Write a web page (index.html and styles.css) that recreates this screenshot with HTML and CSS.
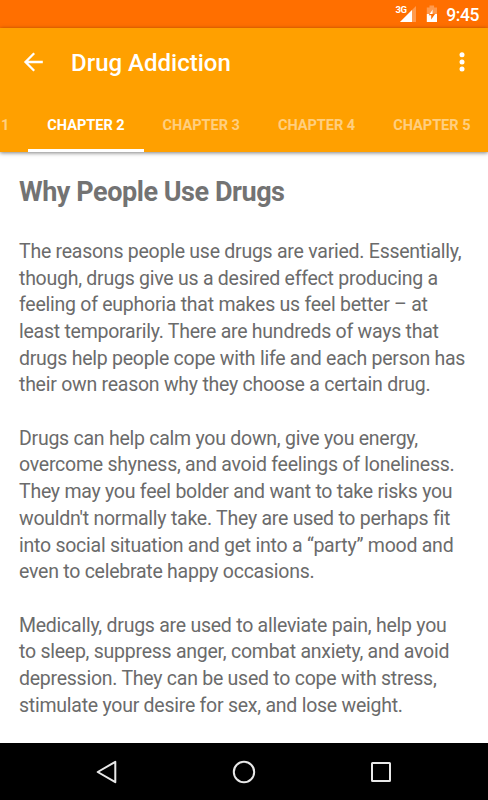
FILE: index.html
```html
<!DOCTYPE html>
<html lang="en">
<head>
    <title>Drug Addiction</title>
    <meta charset="UTF-8">
    <meta name="viewport" content="width=device-width, initial-scale=1.0">
    <link rel="stylesheet" href="styles.css">
</head>
<body>
    <div class="status-bar">
        <svg class="signal" width="22" height="18" viewBox="0 0 22 18">
            <path d="M21 1v16H5z" fill="#fff" fill-opacity="0.3"/>
            <path d="M17 5v12H5z" fill="#fff"/>
            <text class="network" x="0.5" y="8.3">3G</text>
        </svg>
        <svg class="battery" width="12" height="18" viewBox="0 0 12 18">
            <path d="M3.5 0.5h4.6v1.9h2.9V9H.8V2.4h2.7z" fill="#fff" fill-opacity="0.3"/>
            <path d="M.8 9h10.2v8H.8z" fill="#fff"/>
            <path d="M6.6 4.5v4.2h2.6L5.2 14.5V10.3H2.7z" fill="#ff6f00"/>
            <path d="M6.6 4.5V9H3.6z" fill="#fff"/>
        </svg>
        <span class="clock">9:45</span>
    </div>
    <header>
        <div class="toolbar">
            <svg class="back" width="20" height="20" viewBox="0 0 20 20">
                <path d="M19.8 10H2.5M11.2 1.3L2.5 10l8.7 8.7" fill="none" stroke="#fff" stroke-width="2.3"/>
            </svg>
            <h1>Drug Addiction</h1>
            <svg class="more" width="6" height="20" viewBox="0 0 6 20" fill="#fff">
                <circle cx="3" cy="2.8" r="2.5"/>
                <circle cx="3" cy="9.9" r="2.5"/>
                <circle cx="3" cy="17" r="2.5"/>
            </svg>
        </div>
        <nav class="tabs">
            <span class="tab">Chapter 1</span>
            <span class="tab active">Chapter 2</span>
            <span class="tab">Chapter 3</span>
            <span class="tab">Chapter 4</span>
            <span class="tab">Chapter 5</span>
        </nav>
    </header>
    <main>
        <h2>Why People Use Drugs</h2>
        <p>The reasons people use drugs are varied. Essentially,<br>
        though, drugs give us a desired effect producing a<br>
        feeling of euphoria that makes us feel better – at<br>
        least temporarily. There are hundreds of ways that<br>
        drugs help people cope with life and each person has<br>
        their own reason why they choose a certain drug.</p>
        <p>Drugs can help calm you down, give you energy,<br>
        overcome shyness, and avoid feelings of loneliness.<br>
        They may you feel bolder and want to take risks you<br>
        wouldn't normally take. They are used to perhaps fit<br>
        into social situation and get into a “party” mood and<br>
        even to celebrate happy occasions.</p>
        <p>Medically, drugs are used to alleviate pain, help you<br>
        to sleep, suppress anger, combat anxiety, and avoid<br>
        depression. They can be used to cope with stress,<br>
        stimulate your desire for sex, and lose weight.</p>
    </main>
    <footer>
        <svg width="24" height="24" viewBox="0 0 24 24">
            <path d="M20.3 1.8v20.4L2.7 12z"/>
        </svg>
        <svg width="24" height="24" viewBox="0 0 24 24">
            <circle cx="12" cy="12" r="10.2"/>
        </svg>
        <svg width="24" height="24" viewBox="0 0 24 24">
            <rect x="3" y="3" width="18" height="18" rx="0.5"/>
        </svg>
    </footer>
</body>
</html>
```

FILE: styles.css
```css
body {
    font-family: Roboto, sans-serif;
    background-color: #fff;
    color: #737373;
    margin: 0;
    height: 800px;
    display: flex;
    flex-direction: column;
    overflow: hidden;
}

.status-bar {
    height: 28px;
    flex-shrink: 0;
    box-sizing: border-box;
    padding: 0 9px 0 0;
    background-color: #ff6f00;
    color: #fff;
    display: flex;
    justify-content: flex-end;
    align-items: center;
}

.network {
    font-size: 9.5px;
    font-weight: bold;
    letter-spacing: -0.5px;
    fill: #fff;
}

.signal {
    margin-right: 9px;
    overflow: visible;
}

.battery {
    margin-right: 8px;
}

.clock {
    font-size: 17.5px;
    font-weight: 500;
    line-height: 28px;
    letter-spacing: -0.4px;
    padding-top: 2px;
}

header {
    height: 124px;
    flex-shrink: 0;
    background-color: #ffa000;
    color: #fff;
    box-shadow: 0 1px 4px rgba(0,0,0,0.5);
}

.toolbar {
    height: 68px;
    padding: 0 23px;
    display: flex;
    align-items: center;
}

h1 {
    font-size: 24px;
    font-weight: 500;
    margin: 1px auto 0 28px;
}

.tabs {
    height: 56px;
    display: flex;
    overflow: hidden;
    margin-left: -87px;
}

.tab {
    width: 115.3px;
    height: 56px;
    flex-shrink: 0;
    box-sizing: border-box;
    border-bottom: 3px solid transparent;
    font-size: 14.5px;
    font-weight: bold;
    line-height: 59px;
    text-align: center;
    text-transform: uppercase;
    color: rgba(255,255,255,0.5);
}

.active {
    color: #fff;
    border-color: #fff;
}

main {
    flex: 1;
    min-height: 0;
    padding: 0 19px;
    white-space: nowrap;
}

h2 {
    font-size: 27px;
    line-height: 32px;
    letter-spacing: -0.45px;
    margin: 24px 0 30.8px;
}

p {
    font-size: 19.5px;
    line-height: 26.7px;
    letter-spacing: -0.25px;
    margin: 0 0 26.7px;
    color: #6b6b6b;
}

footer {
    height: 57px;
    flex-shrink: 0;
    background-color: #000;
    display: flex;
    justify-content: center;
    align-items: center;
    gap: 113px;
}

footer svg {
    fill: none;
    stroke: #e8e8e8;
    stroke-width: 2;
    stroke-linejoin: round;
}
```
